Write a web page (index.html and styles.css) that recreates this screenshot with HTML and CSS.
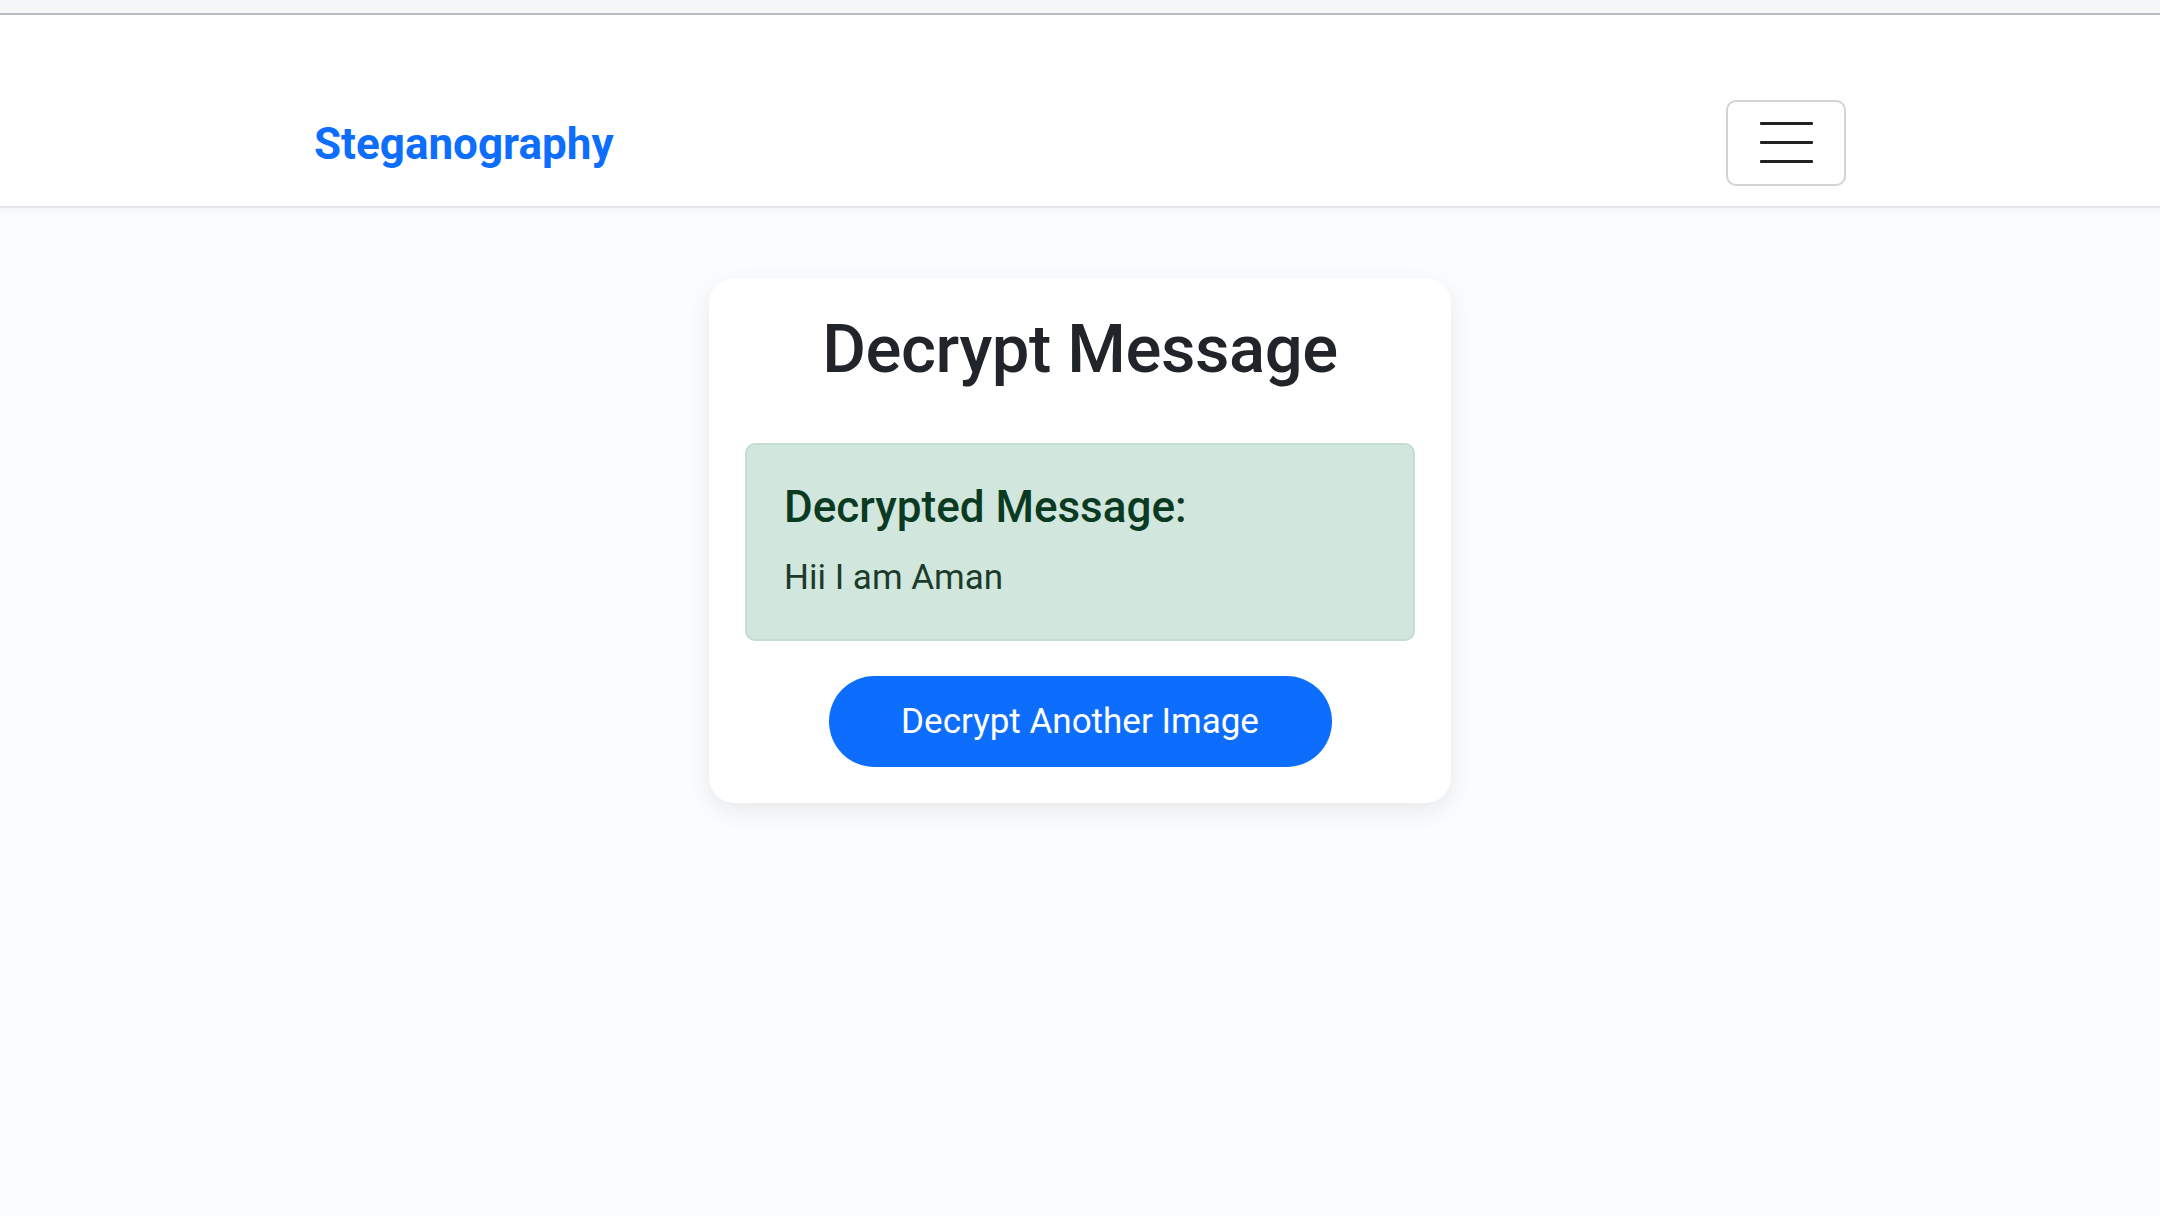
FILE: index.html
```html
<!DOCTYPE html>
<html lang="en">
<head>
<meta charset="utf-8">
<title>Steganography</title>
<link rel="stylesheet" href="styles.css">
</head>
<body>
<div class="topstrip"></div>
<nav class="navbar">
  <div class="nav-inner">
    <a class="brand" href="#">Steganography</a>
    <button class="toggler" aria-label="Toggle navigation">
      <span class="bar"></span><span class="bar"></span><span class="bar"></span>
    </button>
  </div>
</nav>
<main class="main">
  <section class="card">
    <h1 class="title">Decrypt Message</h1>
    <div class="alert">
      <h2 class="alert-heading">Decrypted Message:</h2>
      <p class="alert-text">Hii I am Aman</p>
    </div>
    <div class="actions">
      <a class="btn" href="#">Decrypt Another Image</a>
    </div>
  </section>
</main>
</body>
</html>
```

FILE: styles.css
```css
* { box-sizing: border-box; }
html, body { margin: 0; padding: 0; }
body {
  background: #fbfcfd;
  font-family: Roboto, "Noto Sans", "Liberation Sans", sans-serif;
  color: #212529;
  min-height: 1216px;
}
.topstrip { height: 13px; background: #f6f7f9; }
.navbar {
  background: #ffffff;
  border-top: 2px solid #b9bcc4;
  border-bottom: 2px solid #e3e6ea;
  height: 195px;
  box-shadow: 0 3px 6px rgba(0,0,0,0.03);
}
.nav-inner {
  width: 1532px;
  margin: 0 auto;
  height: 100%;
  display: flex;
  align-items: center;
  justify-content: space-between;
  padding-top: 64px;
}
.brand {
  font-family: Roboto, "Liberation Sans", sans-serif;
  font-weight: 700;
  font-size: 44px;
  color: #0d6efd;
  text-decoration: none;
  margin-top: 2px;
}
.toggler {
  width: 120px;
  height: 86px;
  background: #fff;
  border: 2px solid #d2d4d8;
  border-radius: 10px;
  display: flex;
  flex-direction: column;
  justify-content: center;
  align-items: center;
  gap: 16px;
  padding: 0;
}
.bar {
  display: block;
  width: 53px;
  height: 3px;
  background: #222;
  border-radius: 1px;
}
.main {
  display: flex;
  justify-content: center;
  padding-top: 70px;
}
.card {
  width: 742px;
  background: #fff;
  border-radius: 26px;
  padding: 29px 36px 36px;
  box-shadow: 0 8px 24px rgba(0,0,0,0.08);
}
.title {
  margin: 0;
  text-align: center;
  font-weight: 500;
  font-size: 67px;
  line-height: 84px;
  letter-spacing: -0.4px;
  color: #212529;
}
.alert {
  margin-top: 52px;
  background: #d1e7dd;
  border: 2px solid #c4ded1;
  border-radius: 10px;
  padding: 34px 37px 0;
  color: #0f5132;
  height: 198px;
}
.alert-heading {
  margin: 0;
  font-weight: 500;
  font-size: 44px;
  line-height: 56px;
  color: #0b3a22;
}
.alert-text {
  margin: 21px 0 0;
  font-size: 35px;
  line-height: 44px;
  color: #1c3b2b;
}
.actions {
  display: flex;
  justify-content: center;
  margin-top: 35px;
}
.btn {
  width: 503px;
  height: 91px;
  border-radius: 46px;
  background: #0d6efd;
  color: #fff;
  text-decoration: none;
  display: flex;
  align-items: center;
  justify-content: center;
  font-size: 35px;
  font-weight: 400;
}
```
